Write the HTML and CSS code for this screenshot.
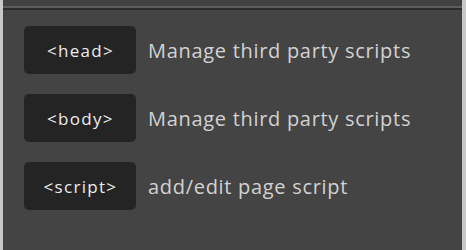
FILE: index.html
```html
<!doctype html>
<html lang="en">
<head>
  <meta charset="utf-8" />
  <title>Scripts</title>
  <link rel="stylesheet" href="styles.css">
</head>
<body>
  <div class="frame">
    <div class="topbar"></div>
    <div class="panel">
      <div class="item">
        <button class="tag">&lt;head&gt;</button>
        <span class="desc">Manage third party scripts</span>
      </div>
      <div class="item">
        <button class="tag">&lt;body&gt;</button>
        <span class="desc">Manage third party scripts</span>
      </div>
      <div class="item">
        <button class="tag">&lt;script&gt;</button>
        <span class="desc">add/edit page script</span>
      </div>
    </div>
  </div>
</body>
</html>
```
FILE: styles.css
```css
body { margin:0; background:#c8c8c8; font-family: "Open Sans", Lato, Arial, sans-serif; }
.frame { margin:0 4px 0 3px; height:250px; background:#444; }
.topbar { height:6px; background:#414141; border-bottom:2px solid #5c5c5c; box-shadow:0 2px 0 #2b2b2b; }
.panel { padding:18px 0 0 21px; display:flex; flex-direction:column; gap:20px; }
.item { display:flex; align-items:center; gap:12px; }
.tag { width:112px; height:48px; background:#242424; color:#ececec; border:none; border-radius:5px; font-family:inherit; font-size:17px; letter-spacing:1.3px; padding:0 0 0 1px; }
.desc { color:#d2d2d2; font-size:20px; letter-spacing:0.7px; }
```
